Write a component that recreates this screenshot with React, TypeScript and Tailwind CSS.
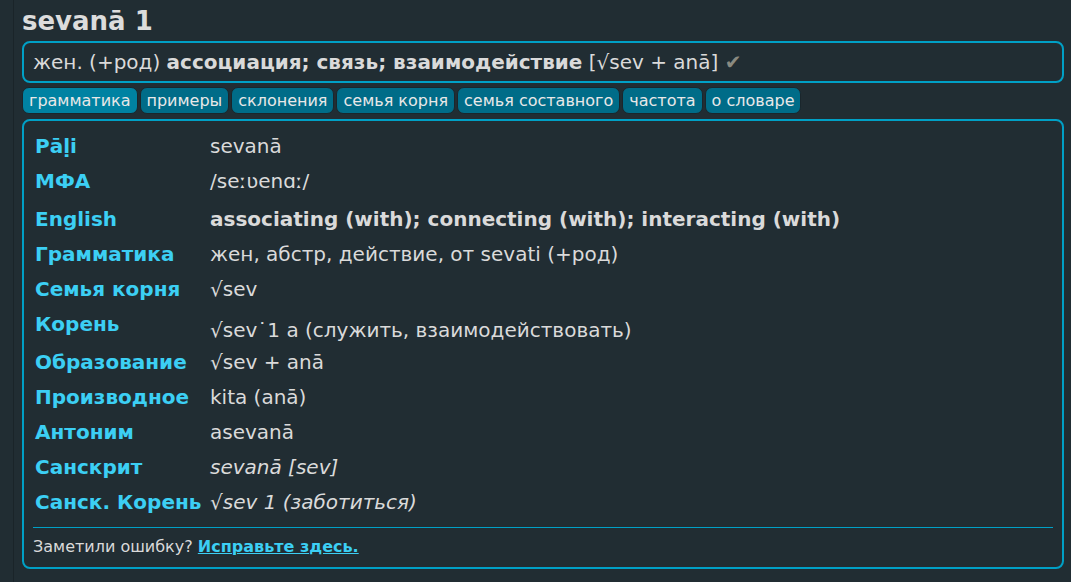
import React from 'react'

const tabs = ['грамматика', 'примеры', 'склонения', 'семья корня', 'семья составного', 'частота', 'о словаре']

type Row = { label: string; value: string; cls?: string; pad?: string; thPad?: string }

const rows: Row[] = [
  { label: 'Pāḷi', value: 'sevanā' },
  { label: 'МФА', value: '/seːʋenɑː/', pad: 'pt-[6px] pb-[9px]', thPad: 'pt-[6px] pb-[9px]' },
  { label: 'English', value: 'associating (with); connecting (with); interacting (with)', cls: 'font-bold' },
  { label: 'Грамматика', value: 'жен, абстр, действие, от sevati (+род)' },
  { label: 'Семья корня', value: '√sev' },
  { label: 'Корень', value: '√sev˙1 a (служить, взаимодействовать)', pad: 'pt-[12px] pb-[3px]' },
  { label: 'Образование', value: '√sev + anā' },
  { label: 'Производное', value: 'kita (anā)' },
  { label: 'Антоним', value: 'asevanā' },
  { label: 'Санскрит', value: 'sevanā [sev]', cls: 'italic' },
  { label: 'Санск. Корень', value: '√sev 1 (заботиться)', cls: 'italic' },
]

export default function App() {
  return (
    <div className="min-h-screen bg-[#212d33] text-[#dadada] font-['DejaVu_Sans',sans-serif]">
      <div className="ml-[13px] min-h-screen border-l border-[#1a2429] pl-[8px] pr-[7px] pt-[5px]">
        <h1 className="text-[26px] leading-[33px] font-bold text-[#dcdcdc]">sevanā 1</h1>
        <div className="mt-[3px] border-2 border-[#00a0c6] rounded-[8px] px-[9px] h-[42px] flex items-center text-[20px]">
          <span>
            жен. (+род) <b>ассоциация; связь; взаимодействие</b> [√sev + anā]{' '}
            <span className="text-[#8a8a80]">✔</span>
          </span>
        </div>
        <div className="mt-[4px] flex gap-[2px]">
          {tabs.map((t, i) => (
            <div
              key={t}
              className={
                i === 0
                  ? 'h-[27px] px-[6px] flex items-center rounded-[7px] border border-[#1a262c] bg-[#0082a2] text-[16px] text-[#e8e8e8]'
                  : 'h-[27px] px-[6px] flex items-center rounded-[7px] border border-[#1a262c] bg-[#006c88] text-[16px] text-[#e8e8e8]'
              }
            >
              {t}
            </div>
          ))}
        </div>
        <div className="mt-[5px] border-2 border-[#00a0c6] rounded-[8px] px-[9px] pt-[8px] pb-[8px]">
          <table className="border-separate border-spacing-0 text-[20px]">
            <tbody>
              {rows.map(r => (
                <tr key={r.label}>
                  <th className={`w-[177px] text-left align-top font-bold text-[#3ccff4] pl-[2px] leading-[23px] whitespace-nowrap ${r.thPad ?? 'py-[6px]'}`}>
                    {r.label}
                  </th>
                  <td className={`align-top leading-[23px] ${r.pad ?? 'py-[6px]'} ${r.cls ?? ''}`}>{r.value}</td>
                </tr>
              ))}
            </tbody>
          </table>
          <div className="mt-[7px] h-px bg-[#00a0c6]" />
          <p className="mt-[7px] text-[16px]">
            Заметили ошибку?{' '}
            <a className="font-bold underline text-[#3ccff4]" href="#">Исправьте здесь.</a>
          </p>
        </div>
      </div>
    </div>
  )
}
